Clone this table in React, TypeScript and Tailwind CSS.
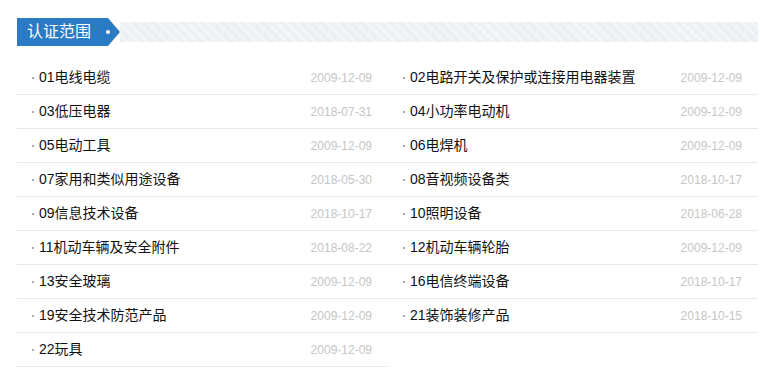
import React from "react";

const items: [string, string][] = [
  ["01电线电缆", "2009-12-09"],
  ["02电路开关及保护或连接用电器装置", "2009-12-09"],
  ["03低压电器", "2018-07-31"],
  ["04小功率电动机", "2009-12-09"],
  ["05电动工具", "2009-12-09"],
  ["06电焊机", "2009-12-09"],
  ["07家用和类似用途设备", "2018-05-30"],
  ["08音视频设备类", "2018-10-17"],
  ["09信息技术设备", "2018-10-17"],
  ["10照明设备", "2018-06-28"],
  ["11机动车辆及安全附件", "2018-08-22"],
  ["12机动车辆轮胎", "2009-12-09"],
  ["13安全玻璃", "2009-12-09"],
  ["16电信终端设备", "2018-10-17"],
  ["19安全技术防范产品", "2009-12-09"],
  ["21装饰装修产品", "2018-10-15"],
  ["22玩具", "2009-12-09"],
];

export default function App() {
  return (
    <div
      className="w-[760px] h-[378px] bg-white overflow-hidden"
      style={{ fontFamily: '"Liberation Sans", Arial, "Noto Sans CJK SC", sans-serif' }}
    >
      <div className="ml-[17px] mt-[18px] w-[741px] h-[28px] flex items-center">
        <div className="w-[103px] h-[28px] bg-[#2b7ac4] flex items-center [clip-path:polygon(0_0,91px_0,103px_50%,91px_100%,0_100%)]">
          <span className="pl-[10px] text-[16px] leading-none text-white">认证范围</span>
          <span className="ml-[15px] w-[4px] h-[4px] rounded-full bg-white" />
        </div>
        <div className="flex-1 h-[20px] bg-[repeating-linear-gradient(45deg,#edf0f3_0px,#edf0f3_4px,#f3f5f7_4px,#f3f5f7_7px)]" />
      </div>
      <div className="ml-[17px] mt-[15px] grid grid-cols-[371px_370px]">
        {items.map(([name, date]) => (
          <div
            key={name}
            className="h-[34px] border-b border-[#e8e8e8] flex items-center pl-[15px] pr-[16px]"
          >
            <span className="w-[2px] h-[2px] bg-[#aaa]" />
            <span className="ml-[5px] text-[14px] text-[#111] flex-1">{name}</span>
            <span className="text-[12px] text-[#c6c6c6]">{date}</span>
          </div>
        ))}
      </div>
    </div>
  );
}
